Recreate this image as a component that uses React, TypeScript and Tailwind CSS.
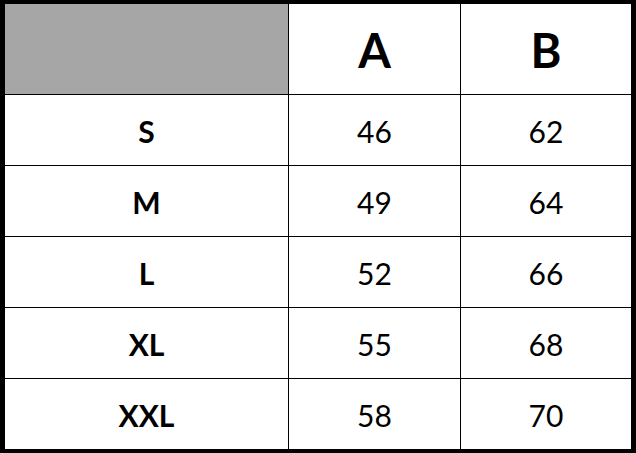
const rows = [
  { size: 'S', a: 46, b: 62 },
  { size: 'M', a: 49, b: 64 },
  { size: 'L', a: 52, b: 66 },
  { size: 'XL', a: 55, b: 68 },
  { size: 'XXL', a: 58, b: 70 },
];

export default function App() {
  return (
    <div
      className="w-[636px] h-[453px] bg-black pt-[4px] pb-[4px] pl-[5px] pr-[5px]"
      style={{ fontFamily: 'Lato, "Open Sans", sans-serif' }}
    >
      <div className="grid grid-cols-[283px_171px_170px] grid-rows-[90px_repeat(5,70px)] gap-px bg-black text-black">
        <div className="bg-[#a6a6a6]" />
        <div className="bg-white flex items-center justify-center text-[47px] font-bold leading-none pt-[3px]">A</div>
        <div className="bg-white flex items-center justify-center text-[47px] font-bold leading-none pt-[3px]">B</div>

        {rows.map((row) => (
          <div key={row.size} className="contents">
            <div className="bg-white flex items-center justify-center text-[30px] font-bold leading-none pt-[2px]">
              {row.size}
            </div>
            <div className="bg-white flex items-center justify-center text-[30px] leading-none pt-[2px]">
              {row.a}
            </div>
            <div className="bg-white flex items-center justify-center text-[30px] leading-none pt-[2px]">
              {row.b}
            </div>
          </div>
        ))}
      </div>
    </div>
  );
}
